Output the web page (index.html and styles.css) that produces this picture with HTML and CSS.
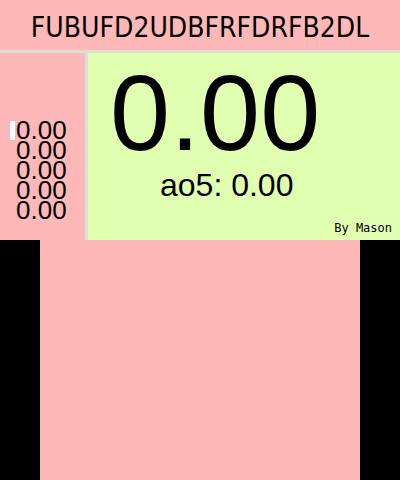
FILE: index.html
```html
<!DOCTYPE html>
<html>
<head>
<meta charset="utf-8">
<link rel="stylesheet" href="styles.css">
</head>
<body>
<div class="page">
  <header class="scramble">FUBUFD2UDBFRFDRFB2DL</header>
  <div class="main-row">
    <div class="times">
      <div class="time-line"><span class="cursor"></span><span>0.00</span></div>
      <div class="time-line"><span>0.00</span></div>
      <div class="time-line"><span>0.00</span></div>
      <div class="time-line"><span>0.00</span></div>
      <div class="time-line"><span>0.00</span></div>
    </div>
    <div class="timer">
      <div class="big-time">0.00</div>
      <div class="average">ao5: 0.00</div>
      <div class="credit">By Mason</div>
    </div>
  </div>
  <div class="footer-area"></div>
</div>
</body>
</html>
```
FILE: styles.css
```css
html, body {
  margin: 0;
  padding: 0;
  height: 100%;
  background: #000;
}
.page {
  display: flex;
  flex-direction: column;
  height: 480px;
}
.scramble {
  height: 44px;
  padding-top: 6px;
  line-height: 44px;
  background: #ffb8b8;
  text-align: center;
  font-family: "DejaVu Sans", sans-serif;
  font-stretch: condensed;
  font-size: 28px;
  color: #000;
}
.main-row {
  display: flex;
  height: 187px;
  border-top: 3px solid #dddddd;
}
.times {
  width: 75px;
  padding: 67px 0 0 10px;
  background: #ffb8b8;
  border-right: 3px solid #dddddd;
  font-family: "Liberation Sans", Arial, sans-serif;
  font-size: 26px;
  line-height: 20px;
  color: #000;
}
.time-line {
  display: flex;
  align-items: center;
  padding-left: 6px;
}
.time-line:first-child {
  padding-left: 0;
}
.cursor {
  display: inline-block;
  width: 5px;
  height: 19px;
  margin-right: 1px;
  background: #fff;
}
.timer {
  flex: 1;
  display: flex;
  flex-direction: column;
  background: #e0ffb0;
  font-family: "Liberation Sans", Arial, sans-serif;
  color: #000;
}
.big-time {
  padding: 6px 0 0 22px;
  font-size: 108px;
  line-height: 108px;
}
.average {
  padding-left: 72px;
  font-size: 32px;
  line-height: 36px;
}
.credit {
  margin-top: auto;
  padding: 0 8px 5px 0;
  text-align: right;
  font-family: "DejaVu Sans Mono", monospace;
  font-size: 12px;
  line-height: 14px;
}
.footer-area {
  flex: 1;
  margin: 0 40px;
  background: #ffb8b8;
}
```
